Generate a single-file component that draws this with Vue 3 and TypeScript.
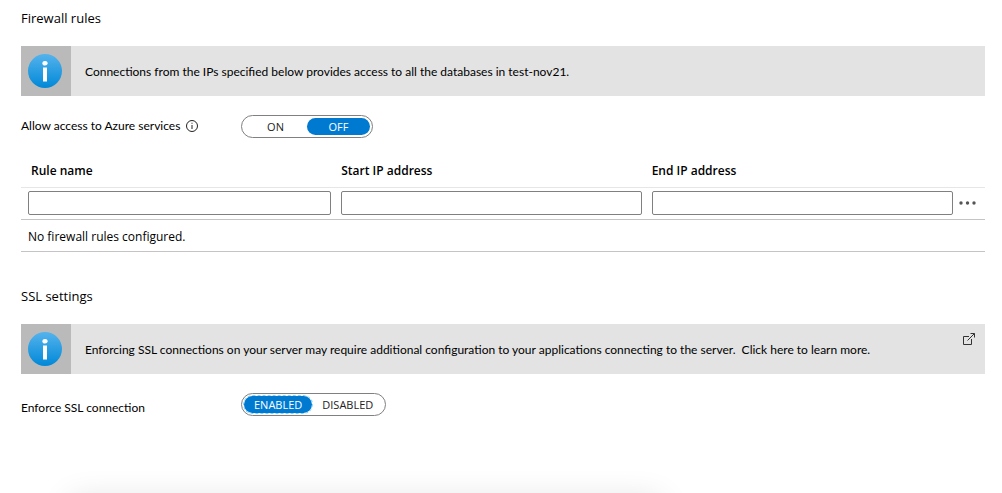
<script setup lang="ts">
import { ref } from 'vue'

interface RuleField {
  key: string
  label: string
}

const fields: RuleField[] = [
  { key: 'name', label: 'Rule name' },
  { key: 'start', label: 'Start IP address' },
  { key: 'end', label: 'End IP address' },
]

const rule = ref<Record<string, string>>({ name: '', start: '', end: '' })
const azureAccess = ref<'on' | 'off'>('off')
const sslEnforced = ref<'enabled' | 'disabled'>('enabled')
</script>

<template>
  <main class="page">
    <section class="firewall">
      <h2 class="heading">Firewall rules</h2>

      <div class="banner">
        <span class="banner-icon">
          <svg viewBox="0 0 34 34" width="34" height="34" aria-hidden="true">
            <defs>
              <linearGradient id="disc-firewall" x1="0" y1="0" x2="0" y2="1">
                <stop offset="0" stop-color="#55b3ec" />
                <stop offset="1" stop-color="#0088d8" />
              </linearGradient>
            </defs>
            <circle cx="17" cy="17" r="17" fill="url(#disc-firewall)" />
            <ellipse cx="17" cy="9.2" rx="2.6" ry="2.3" fill="#fff" />
            <rect x="15" y="13.5" width="4" height="14" fill="#fff" />
          </svg>
        </span>
        <p class="banner-text">Connections from the IPs specified below provides access to all the databases in test-nov21.</p>
      </div>

      <div class="setting" role="radiogroup" aria-labelledby="azure-label">
        <span class="setting-label high">
          <span id="azure-label">Allow access to Azure services</span>
          <svg class="hint" viewBox="0 0 12 12" width="12" height="12" aria-hidden="true">
            <circle cx="6" cy="6" r="5.5" fill="none" stroke="#222" />
            <path d="M5.5 2.8h1v1h-1zM5.5 5h1v4h-1z" fill="#222" />
          </svg>
        </span>
        <span class="toggle">
          <label class="option wide">
            <input v-model="azureAccess" type="radio" name="azure" value="on" />
            <span>ON</span>
          </label>
          <label class="option wide">
            <input v-model="azureAccess" type="radio" name="azure" value="off" />
            <span>OFF</span>
          </label>
        </span>
      </div>

      <table class="rules">
        <colgroup>
          <col class="col-name" />
          <col class="col-start" />
          <col class="col-end" />
          <col />
        </colgroup>
        <thead>
          <tr>
            <th v-for="field in fields" :id="`head-${field.key}`" :key="field.key" scope="col">{{ field.label }}</th>
            <td></td>
          </tr>
        </thead>
        <tbody>
          <tr class="entry">
            <td v-for="field in fields" :key="field.key">
              <input v-model="rule[field.key]" class="box" type="text" :aria-labelledby="`head-${field.key}`" />
            </td>
            <td class="actions">
              <button class="more" type="button" aria-label="More actions">
                <svg viewBox="0 0 17 4" width="17" height="4" aria-hidden="true">
                  <circle cx="2" cy="2" r="1.7" fill="#555" />
                  <circle cx="8.5" cy="2" r="1.7" fill="#555" />
                  <circle cx="15" cy="2" r="1.7" fill="#555" />
                </svg>
              </button>
            </td>
          </tr>
          <tr class="empty">
            <td colspan="4">No firewall rules configured.</td>
          </tr>
        </tbody>
      </table>
    </section>

    <section class="ssl">
      <h2 class="heading">SSL settings</h2>

      <a class="banner" href="#">
        <span class="banner-icon">
          <svg viewBox="0 0 34 34" width="34" height="34" aria-hidden="true">
            <defs>
              <linearGradient id="disc-ssl" x1="0" y1="0" x2="0" y2="1">
                <stop offset="0" stop-color="#55b3ec" />
                <stop offset="1" stop-color="#0088d8" />
              </linearGradient>
            </defs>
            <circle cx="17" cy="17" r="17" fill="url(#disc-ssl)" />
            <ellipse cx="17" cy="9.2" rx="2.6" ry="2.3" fill="#fff" />
            <rect x="15" y="13.5" width="4" height="14" fill="#fff" />
          </svg>
        </span>
        <span class="banner-text">Enforcing SSL connections on your server may require additional configuration to your applications connecting to the server.&nbsp; Click here to learn more.</span>
        <svg class="external" viewBox="0 0 12 12" width="12" height="12" fill="none" stroke="#333" aria-hidden="true">
          <path d="M6 3.5H.5v8h8V6" />
          <path d="M4.5 7.5 11.3.7M7.5.5h4v4" />
        </svg>
      </a>

      <div class="setting" role="radiogroup" aria-labelledby="ssl-label">
        <span id="ssl-label" class="setting-label low">Enforce SSL connection</span>
        <span class="toggle">
          <label class="option focused">
            <input v-model="sslEnforced" type="radio" name="ssl" value="enabled" />
            <span>ENABLED</span>
          </label>
          <label class="option">
            <input v-model="sslEnforced" type="radio" name="ssl" value="disabled" />
            <span>DISABLED</span>
          </label>
        </span>
      </div>
    </section>

    <div class="sheet"></div>
  </main>
</template>

<style>
body {
  background: #fff;
  overflow: hidden;
}
</style>

<style scoped>
.page {
  padding: 8px 17px 0 21px;
  font-family: 'Open Sans', 'Noto Sans', sans-serif;
  font-size: 12px;
  line-height: 16px;
  color: #000;
}

.heading {
  margin: 0;
  font-size: 13px;
  font-weight: 400;
  line-height: 20px;
}

.banner {
  display: flex;
  align-items: center;
  min-height: 50px;
  margin-top: 18px;
  background: #e3e3e3;
  color: inherit;
  text-decoration: none;
}

.banner-icon {
  display: flex;
  flex: none;
  align-items: center;
  align-self: stretch;
  justify-content: center;
  width: 50px;
  padding-right: 2px;
  box-sizing: border-box;
  background: #bababa;
}

.banner-text,
.setting-label {
  font-family: Lato, 'Open Sans', sans-serif;
}

.banner-text {
  flex: 1;
  margin: 0;
  padding: 2px 0 0 14px;
}

.external {
  flex: none;
  align-self: flex-start;
  margin: 9px 10px 0 0;
}

.setting {
  display: flex;
  align-items: center;
  margin-top: 19px;
}

.setting-label {
  display: flex;
  align-items: center;
  gap: 6px;
  width: 220px;
}

.high {
  padding-bottom: 2px;
}

.low {
  padding-top: 6px;
}

.toggle {
  display: flex;
  box-sizing: border-box;
  height: 23px;
  padding: 2px;
  border: 1px solid #808080;
  border-radius: 12px;
}

.option {
  position: relative;
  display: flex;
  cursor: pointer;
}

.option input {
  position: absolute;
  inset: 0;
  margin: 0;
  opacity: 0;
}

.option span {
  box-sizing: border-box;
  padding: 0 10px;
  border-radius: 9px;
  font-size: 11px;
  line-height: 17px;
  text-align: center;
  color: #222;
}

.wide span {
  min-width: 63px;
}

.option input:checked + span {
  background: #007ad1;
  color: #fff;
}

.focused input:checked + span {
  outline: 1px dashed #7fd4ff;
}

.rules {
  width: 100%;
  margin-top: 16px;
  border-collapse: collapse;
  table-layout: fixed;
}

.col-name {
  width: 32.7%;
}

.col-start {
  width: 32.2%;
}

.col-end {
  width: 32.3%;
}

.rules th,
.rules td {
  padding: 0 5px;
  text-align: left;
}

.rules th {
  height: 33px;
  font-weight: 600;
}

.rules th:first-child {
  padding-left: 10px;
}

.rules thead tr {
  border-bottom: 1px solid #e6e6e6;
}

.entry,
.empty {
  height: 32px;
  border-bottom: 1px solid #c4c4c4;
}

.rules tbody td:first-child {
  padding-left: 7px;
}

.rules .entry td {
  padding-bottom: 2px;
}

.rules .empty td {
  padding-top: 2px;
}

.box {
  display: block;
  box-sizing: border-box;
  width: 100%;
  height: 24px;
  padding: 0 6px;
  border: 1px solid #808080;
  border-radius: 2px;
  background: #fff;
  font: inherit;
}

.rules .actions {
  padding: 0;
}

.more {
  display: flex;
  padding: 6px 0 6px 1px;
  border: 0;
  background: none;
}

.ssl {
  margin-top: 34px;
}

/* Top edge shadow of the panel below the fold */
.sheet {
  position: fixed;
  top: 100%;
  left: 7%;
  right: 34%;
  height: 40px;
  margin-top: 6px;
  box-shadow: 0 0 32px rgba(0, 0, 0, 0.12);
}
</style>
